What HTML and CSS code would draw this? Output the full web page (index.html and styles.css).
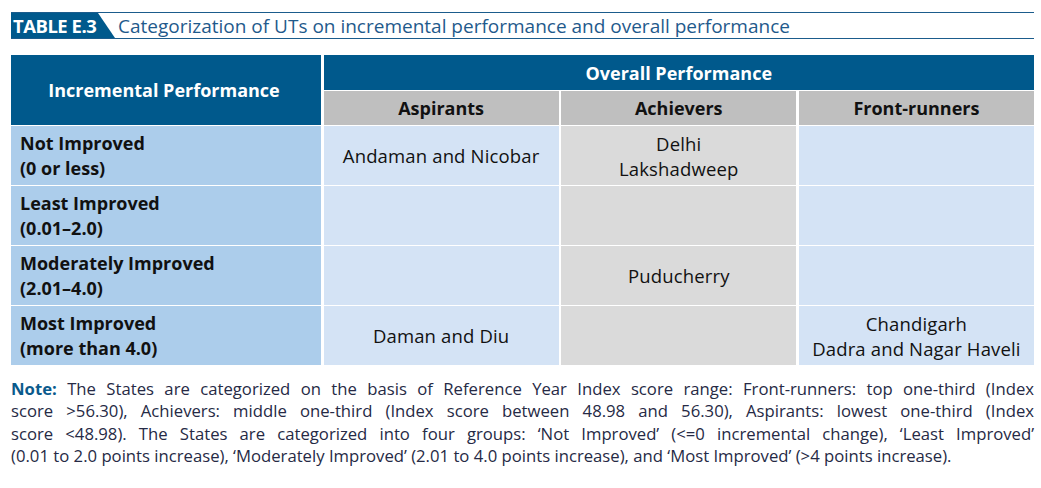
FILE: index.html
```html
<!DOCTYPE html>
<html lang="en">
<head>
<meta charset="utf-8">
<title>Table E.3</title>
<link rel="stylesheet" href="styles.css">
</head>
<body>
<div class="page">
  <div class="caption">
    <span class="tag">TABLE E.3</span>
    <span class="caption-text">Categorization of UTs on incremental performance and overall performance</span>
  </div>

  <div class="table">
    <div class="h-incr">Incremental Performance</div>
    <div class="h-overall">Overall Performance</div>
    <div class="h-sub">Aspirants</div>
    <div class="h-sub">Achievers</div>
    <div class="h-sub">Front-runners</div>

    <div class="rowhead">Not Improved<br>(0 or less)</div>
    <div class="cell">Andaman and Nicobar</div>
    <div class="cell grey">Delhi<br>Lakshadweep</div>
    <div class="cell"></div>

    <div class="rowhead">Least Improved<br>(0.01–2.0)</div>
    <div class="cell"></div>
    <div class="cell grey"></div>
    <div class="cell"></div>

    <div class="rowhead">Moderately Improved<br>(2.01–4.0)</div>
    <div class="cell"></div>
    <div class="cell grey">Puducherry</div>
    <div class="cell"></div>

    <div class="rowhead">Most Improved<br>(more than 4.0)</div>
    <div class="cell">Daman and Diu</div>
    <div class="cell grey"></div>
    <div class="cell">Chandigarh<br>Dadra and Nagar Haveli</div>
  </div>

  <p class="note">
    <span class="line"><b>Note:</b> The States are categorized on the basis of Reference Year Index score range: Front-runners: top one-third (Index</span>
    <span class="line">score &gt;56.30), Achievers: middle one-third (Index score between 48.98 and 56.30), Aspirants: lowest one-third (Index</span>
    <span class="line">score &lt;48.98). The States are categorized into four groups: ‘Not Improved’ (&lt;=0 incremental change), ‘Least Improved’</span>
    <span class="line last">(0.01 to 2.0 points increase), ‘Moderately Improved’ (2.01 to 4.0 points increase), and ‘Most Improved’ (&gt;4 points increase).</span>
  </p>
</div>
</body>
</html>
```

FILE: styles.css
```css
html, body {
  margin: 0;
  padding: 0;
  background: #ffffff;
}

.page {
  width: 1023px;
  padding: 12px 0 0 11px;
  font-family: "Open Sans", "Liberation Sans", sans-serif;
}

.caption {
  display: flex;
  align-items: center;
  height: 25px;
  border-top: 1px solid #1b5c8c;
  border-bottom: 1px solid #1b5c8c;
}

.tag {
  align-self: stretch;
  display: flex;
  align-items: center;
  width: 104px;
  padding-left: 2px;
  box-sizing: border-box;
  background: #00598c;
  color: #ffffff;
  font-weight: 700;
  font-size: 18.5px;
  letter-spacing: -0.5px;
  clip-path: polygon(0 0, 87px 0, 100% 100%, 0 100%);
}

.caption-text {
  margin-left: 3px;
  color: #1f5a8c;
  font-size: 19px;
}

.table {
  margin-top: 16px;
  display: grid;
  grid-template-columns: 310px 1fr 1fr 1fr;
  grid-template-rows: 35px 34px repeat(4, 59px);
  column-gap: 2.5px;
  row-gap: 1px;
  color: #111111;
}

.h-incr,
.h-overall,
.h-sub,
.rowhead {
  font-weight: 700;
  font-size: 18px;
}

.h-incr {
  grid-row: 1 / span 2;
  background: #00598c;
  color: #ffffff;
  display: flex;
  align-items: center;
  justify-content: center;
  padding-right: 4px;
}

.h-overall {
  grid-column: 2 / span 3;
  background: #00598c;
  color: #ffffff;
  display: flex;
  align-items: center;
  justify-content: center;
}

.h-sub {
  background: #bfbfbf;
  display: flex;
  align-items: center;
  justify-content: center;
}

.rowhead {
  background: #accdeb;
  line-height: 25px;
  padding: 5px 9px;
}

.cell {
  background: #d4e3f5;
  display: flex;
  align-items: center;
  justify-content: center;
  text-align: center;
  font-size: 18.5px;
  letter-spacing: 0.15px;
  line-height: 25px;
}

.cell.grey {
  background: #dadada;
}

.note {
  margin: 13px 0 0 0;
  font-size: 16.7px;
  line-height: 22.3px;
  color: #262a45;
}

.note .line {
  display: block;
  text-align: justify;
  text-align-last: justify;
  white-space: nowrap;
}

.note .line.last {
  text-align-last: left;
}

.note b {
  color: #0a5a8c;
}
```
